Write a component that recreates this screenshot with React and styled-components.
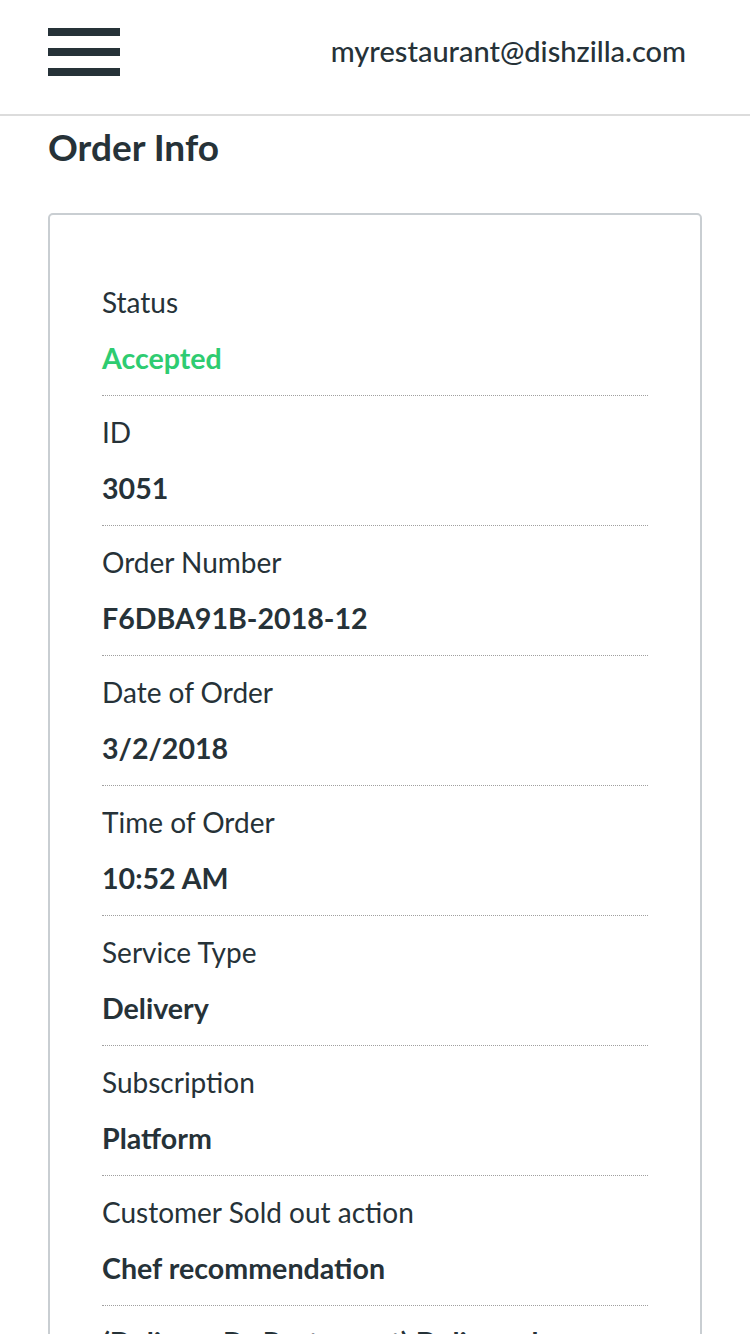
import React from "react";
import styled, { createGlobalStyle } from "styled-components";

const GlobalStyle = createGlobalStyle`
  body {
    margin: 0;
    background: #fff;
    font-family: Lato, "Open Sans", sans-serif;
    color: #263238;
  }
`;

const Header = styled.header`
  height: 116px;
  border-bottom: 2px solid #dcdcdc;
  display: flex;
  align-items: center;
  justify-content: space-between;
  padding: 0 64px 0 48px;
  box-sizing: border-box;
`;

const Burger = styled.button`
  all: unset;
  width: 72px;
  height: 48px;
  display: flex;
  flex-direction: column;
  justify-content: space-between;
  margin-top: -10px;
  span {
    display: block;
    height: 8px;
    background: #263238;
  }
`;

const Email = styled.div`
  font-size: 29px;
  font-weight: 500;
  margin-top: -14px;
`;

const Main = styled.main`
  padding: 0 48px;
`;

const Title = styled.h1`
  font-size: 37px;
  font-weight: 700;
  margin: 0;
  padding: 11px 0 46px;
  line-height: 40px;
`;

const Card = styled.section`
  border: 2px solid #c9ced2;
  border-radius: 5px;
  padding: 51px 52px 0;
`;

const Row = styled.div`
  padding: 16px 0 17px;
  border-bottom: 1px dotted #a0a0a0;
`;

const Label = styled.div`
  font-size: 28px;
  line-height: 40px;
`;

const Value = styled.div`
  font-size: 28.6px;
  line-height: 40px;
  font-weight: 700;
  margin-top: ${(p) => (p.$flush ? "0" : "16px")};
  color: ${(p) => (p.$accent ? "#2ecc71" : "#263238")};
`;

const rows = [
  { label: "Status", value: "Accepted", accent: true },
  { label: "ID", value: "3051" },
  { label: "Order Number", value: "F6DBA91B-2018-12" },
  { label: "Date of Order", value: "3/2/2018" },
  { label: "Time of Order", value: "10:52 AM" },
  { label: "Service Type", value: "Delivery" },
  { label: "Subscription", value: "Platform" },
  { label: "Customer Sold out action", value: "Chef recommendation" },
  { label: "(Delivery By Restaurant) Delivered", value: "No", strong: true },
];

export default function App() {
  return (
    <>
      <GlobalStyle />
      <Header>
        <Burger aria-label="menu">
          <span />
          <span />
          <span />
        </Burger>
        <Email>myrestaurant@dishzilla.com</Email>
      </Header>
      <Main>
        <Title>Order Info</Title>
        <Card>
          {rows.map((r, i) => (
            <Row key={i}>
              {r.strong ? (
                <Value $flush>{r.label}</Value>
              ) : (
                <Label>{r.label}</Label>
              )}
              <Value $accent={r.accent}>{r.value}</Value>
            </Row>
          ))}
        </Card>
      </Main>
    </>
  );
}
